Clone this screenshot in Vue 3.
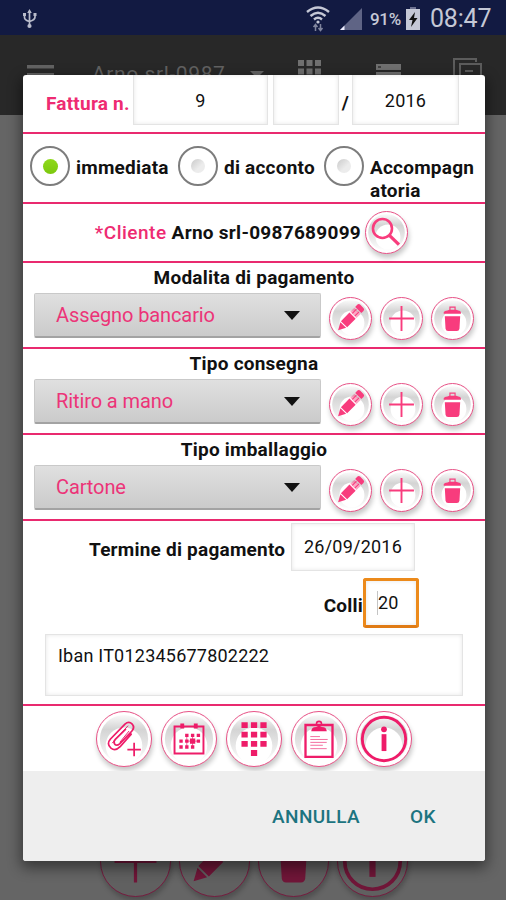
<template>
  <div class="screen">
    <!-- Shared icon shapes -->
    <svg class="icon-defs" aria-hidden="true">
      <defs>
        <linearGradient id="face" x1="0" y1="0" x2="0" y2="1">
          <stop offset="0" stop-color="#fafafa" />
          <stop offset="0.3" stop-color="#d4d4d4" />
          <stop offset="0.65" stop-color="#e8e8e8" />
          <stop offset="1" stop-color="#fff" />
        </linearGradient>
      </defs>
      <symbol id="pencil" viewBox="0 0 56 56">
        <g transform="translate(28 27) rotate(-45)" fill="currentColor">
          <path d="M-24 0L-14-5.500V5.500zM-12.500-6H4V6H-12.500zM15-6H19Q22-6 22-3V3Q22 6 19 6H15z" />
          <path d="M5.500-6H13.500V6H5.500z" opacity=".45" />
          <path d="M6-2.500H14M6 2.500H14" stroke="currentColor" stroke-width="1.500" />
        </g>
      </symbol>
      <symbol id="plus" viewBox="0 0 56 56">
        <path d="M28 11V45M11 28H45" fill="none" stroke="currentColor" stroke-width="2.600" />
      </symbol>
      <symbol id="trash" viewBox="0 0 56 56">
        <path d="M17.500 25H38.500L37.500 42Q37 45 34 45H22Q19 45 18.500 42zM16 21.500V19.500Q17 17 21 17L24 16H33L36 17Q39 17 39.500 19.500V21.500z" fill="currentColor" />
        <path d="M24.500 17V12.500H31.500V17" fill="none" stroke="currentColor" stroke-width="1.600" />
      </symbol>
      <symbol id="search" viewBox="0 0 56 56">
        <g fill="none" stroke="currentColor">
          <circle cx="22.500" cy="22.500" r="13" stroke-width="3.500" />
          <path d="M32 32L45 44.500" stroke-width="4.500" />
        </g>
      </symbol>
      <symbol id="attach" viewBox="0 0 56 56">
        <g fill="none" stroke="currentColor" stroke-width="1.800" stroke-linecap="round">
          <path d="M35.500 23L24 36Q19 41 14.500 37.500Q9.500 33 14 28L29 12.500Q33 9 36.500 12.500Q39.500 16 36 20L23.500 33Q20.500 35.500 18.500 33.500Q16.500 31 19 28.500L29.500 18" />
          <path d="M32 14.500L16 32M33 20L24 31" stroke-width="1" />
          <path d="M38.500 32V46M31.500 39H45.500" stroke-linecap="butt" />
        </g>
      </symbol>
      <symbol id="calendar" viewBox="0 0 56 56">
        <path d="M13 15H43V43H13z" fill="none" stroke="currentColor" stroke-width="2" />
        <path d="M19 12h4v5h-4zM33 12h4v5h-4zM24 22.500h3.500v3.500H24zM30 22.500h3.500v3.500H30zM36 22.500h3.500v3.500H36zM18 28.500h3.500V32H18zM24 28.500h3.500V32H24zM29 27.500h5.500V33H29zM36 28.500h3.500V32H36zM18 34.500h3.500V38H18zM24 34.500h3.500V38H24zM30 34.500h3.500V38H30z" fill="currentColor" />
        <path d="M24 30.200H39M25.700 24V37M31.700 24V37" stroke="currentColor" stroke-width=".7" />
      </symbol>
      <symbol id="keypad" viewBox="0 0 56 56">
        <path d="M15 10.500h6.500v6H15zM24.800 10.500h6.500v6h-6.500zM34.600 10.500h6.500v6h-6.500zM15 20.500h6.500v6H15zM24.800 20.500h6.500v6h-6.500zM34.600 20.500h6.500v6h-6.500zM15 30h6.500v6H15zM24.800 30h6.500v6h-6.500zM34.600 30h6.500v6h-6.500zM24.800 39.500h6.500v6h-6.500z" fill="currentColor" />
      </symbol>
      <symbol id="clipboard" viewBox="0 0 56 56">
        <path d="M14 13.500H42V46.500H14z" fill="none" stroke="currentColor" stroke-width="2.400" />
        <path d="M20 20Q20 15.500 25 15.500H31Q36 15.500 36 20z" fill="currentColor" />
        <circle cx="28" cy="12.300" r="2.600" fill="none" stroke="currentColor" stroke-width="1.600" />
        <path d="M19 25.500H29M19 28.500H37M19 31.500H36M19 34.500H32M19 38H36" stroke="currentColor" stroke-width="1" opacity=".65" />
      </symbol>
      <symbol id="info" viewBox="0 0 56 56">
        <circle cx="28" cy="28" r="22.500" fill="none" stroke="currentColor" stroke-width="3" />
        <circle cx="28" cy="18" r="3" fill="currentColor" />
        <path d="M25.500 23H30.500V40.500H25.500z" fill="currentColor" />
      </symbol>
    </svg>

    <header class="status-bar">
      <svg class="usb" width="16" height="20" viewBox="0 0 16 20" fill="none" stroke="#b9bccb" stroke-width="1.700">
        <path d="M7.500 2V18M2.500 5V8.500Q2.500 11 7.500 12.500M13 5V8Q13 11 7.500 12.500" />
        <path d="M7.500 0L9.800 4H5.200zM1 4h3v3H1zM11.500 4h3v3h-3z" fill="#b9bccb" stroke="none" />
        <circle cx="7.500" cy="17" r="2.100" fill="#b9bccb" stroke="none" />
      </svg>
      <svg width="24" height="26" viewBox="0 0 24 26" fill="none" stroke="#c5c8d6" stroke-width="2.400">
        <path d="M1 6Q12-3 23 6M4.500 10Q12 3.500 19.500 10M8 13.500Q12 10 16 13.500" />
        <circle cx="12" cy="16" r="1.600" fill="#c5c8d6" stroke="none" />
        <path d="M9.500 25V19M7.500 21L9.500 18.500L11.500 21M14.500 18V24M12.500 22L14.500 24.500L16.500 22" stroke="#7f849d" stroke-width="1.500" />
      </svg>
      <svg class="signal" width="22" height="22" viewBox="0 0 22 22">
        <path d="M0 22L22 0V22z" fill="#5f6485" />
        <path d="M0 22L4.500 17.500V22z" fill="#eef" />
      </svg>
      <span class="battery-level">91%</span>
      <svg class="battery" width="14" height="23" viewBox="0 0 14 23">
        <path d="M4 0H10V2H4z" fill="#6c7090" />
        <path d="M0 2H14V23H0z" fill="#c5c8d6" />
        <path d="M9 5L3 13H6.500L5 20L11.500 11H8z" fill="#111" />
      </svg>
      <span class="clock">08:47</span>
    </header>

    <div class="app-bar">
      <svg width="27" height="24" viewBox="0 0 27 24"><path d="M0 0H27V3.500H0zM0 8H27V11H0zM0 16H27V19H0z" fill="#636363" /></svg>
      <span class="app-title">Arno srl-0987</span>
      <svg class="caret" width="14" height="7" viewBox="0 0 14 7"><path d="M0 0H14L7 7z" fill="#666" /></svg>
      <svg class="grid-icon" width="23" height="23" viewBox="0 0 23 23">
        <path d="M0 0h6v6H0zM8.500 0h6v6h-6zM17 0h6v6h-6zM0 8.500h6v6H0zM8.500 8.500h6v6h-6zM17 8.500h6v6h-6z" fill="#707070" />
      </svg>
      <svg class="list-icon" width="25" height="20" viewBox="0 0 25 20">
        <path d="M0 0H25V6H0zM0 8H25V14H0z" fill="#707070" />
        <path d="M2 3H5" stroke="#333" stroke-width="1.500" />
      </svg>
      <svg class="copy-icon" width="29" height="26" viewBox="0 0 29 26" fill="none" stroke="#5c5c5c" stroke-width="2">
        <path d="M1 26V1H23V4M7 26V6H28V26M12 13H20" />
      </svg>
    </div>

    <div class="page-actions">
      <span v-for="icon in pageActions" :key="icon" class="round dim">
        <svg viewBox="0 0 56 56"><use :href="`#${icon}`" /></svg>
      </span>
    </div>

    <div class="dialog">
      <section class="row number-row">
        <label class="accent number-label">Fattura n.</label>
        <span class="field number">{{ invoice.number }}</span>
        <span class="field suffix"></span>
        <span class="slash">/</span>
        <span class="field year">{{ invoice.year }}</span>
      </section>

      <section class="row type-row">
        <div
          v-for="type in types"
          :key="type.value"
          class="option"
          :class="type.value"
          @click="invoice.type = type.value"
        >
          <span class="radio"><i class="dot" :class="{ on: invoice.type === type.value }"></i></span>
          <span class="option-label">{{ type.label }}</span>
        </div>
      </section>

      <section class="row client-row">
        <span><span class="accent client-label">*Cliente</span> {{ invoice.client }}</span>
        <button class="round small">
          <svg viewBox="0 0 56 56"><circle cx="28" cy="28" r="25" fill="url(#face)" /><circle cx="30" cy="34" r="17" fill="#fff" /><use href="#search" /></svg>
        </button>
      </section>

      <section v-for="select in selects" :key="select.title" class="row select-row">
        <h4 class="select-title">{{ select.title }}</h4>
        <div class="select-line">
          <div class="spinner">
            <span>{{ select.value }}</span>
            <i class="arrow"></i>
          </div>
          <button v-for="icon in editActions" :key="icon" class="round small">
            <svg viewBox="0 0 56 56"><circle cx="28" cy="28" r="25" fill="url(#face)" /><circle cx="30" cy="34" r="17" fill="#fff" /><use :href="`#${icon}`" /></svg>
          </button>
        </div>
      </section>

      <section class="row details-row">
        <div class="due-line">
          <label>Termine di pagamento</label>
          <span class="field date">{{ invoice.dueDate }}</span>
        </div>
        <div class="parcels-line">
          <label>Colli</label>
          <span class="field parcels"><i class="cursor"></i>{{ invoice.parcels }}</span>
        </div>
        <div class="field notes">{{ invoice.notes }}</div>
      </section>

      <section class="tools">
        <button v-for="icon in tools" :key="icon" class="round">
          <svg viewBox="0 0 56 56"><circle cx="28" cy="28" r="25" fill="url(#face)" /><circle cx="28" cy="35" r="19" fill="#fff" /><use :href="`#${icon}`" /></svg>
        </button>
      </section>

      <footer class="dialog-footer">
        <span class="cancel">ANNULLA</span>
        <span class="ok">OK</span>
      </footer>
    </div>
  </div>
</template>

<script setup>
import { reactive } from 'vue'

const invoice = reactive({
  number: '9',
  year: '2016',
  type: 'immediate',
  client: 'Arno srl-0987689099',
  dueDate: '26/09/2016',
  parcels: '20',
  notes: 'Iban IT012345677802222'
})

const types = [
  { value: 'immediate', label: 'immediata' },
  { value: 'deposit', label: 'di acconto' },
  { value: 'accompanying', label: 'Accompagnatoria' }
]

const selects = [
  { title: 'Modalita di pagamento', value: 'Assegno bancario' },
  { title: 'Tipo consegna', value: 'Ritiro a mano' },
  { title: 'Tipo imballaggio', value: 'Cartone' }
]

const editActions = ['pencil', 'plus', 'trash']
const tools = ['attach', 'calendar', 'keypad', 'clipboard', 'info']
const pageActions = ['plus', 'pencil', 'trash', 'info']
</script>

<style>
body {
  margin: 0;
}
</style>

<style scoped>
.screen {
  position: relative;
  display: flex;
  flex-direction: column;
  width: 506px;
  height: 900px;
  overflow: hidden;
  background: #656565;
  font-family: Roboto, sans-serif;
  color: #111;
}

.screen * {
  box-sizing: border-box;
}

.icon-defs {
  position: absolute;
  width: 0;
  height: 0;
}

.status-bar {
  display: flex;
  align-items: center;
  height: 35px;
  flex: none;
  padding: 2px 15px 0 22px;
  background: #121a42;
  color: #c5c8d6;
}

.usb {
  margin-right: auto;
}

.signal {
  margin-left: 10px;
}

.battery-level {
  width: 31px;
  margin-left: 8px;
  font-size: 17px;
  font-weight: 500;
  letter-spacing: -0.3px;
}

.battery {
  margin-left: 5px;
}

.clock {
  width: 61px;
  margin-left: 10px;
  font-size: 25px;
  line-height: 30px;
  letter-spacing: -0.2px;
}

.app-bar {
  display: flex;
  align-items: flex-start;
  height: 80px;
  flex: none;
  padding: 30px 23px 0 27px;
  background: #282828;
}

.app-title {
  width: 134px;
  margin: -5px 0 0 38px;
  font-size: 21px;
  line-height: 28px;
  letter-spacing: 0.6px;
  color: #626262;
  white-space: nowrap;
}

.caret {
  margin: 6px 0 0 24px;
}

.grid-icon {
  margin: -5px 0 0 34px;
}

.list-icon {
  margin: -1px 0 0 55px;
}

.copy-icon {
  margin: -7px 0 0 52px;
}

.page-actions {
  display: flex;
  gap: 8px;
  margin-top: auto;
  padding: 0 0 3px 100px;
}

.round {
  flex: none;
  width: 56px;
  height: 56px;
  padding: 0;
  border: 1px solid #e85287;
  border-radius: 50%;
  background: #fff;
  color: #ee1c69;
  box-shadow: 1px 4px 5px rgba(0, 0, 0, 0.22);
}

.round svg {
  display: block;
  width: 100%;
  height: 100%;
}

.round.small {
  width: 43px;
  height: 43px;
  color: #f83c7d;
}

.round.dim {
  width: 71px;
  height: 71px;
  border-color: #761d40;
  background: #606060;
  color: #701638;
}

.dialog {
  position: absolute;
  top: 75px;
  left: 23px;
  width: 462px;
  height: 786px;
  display: flex;
  flex-direction: column;
  overflow: hidden;
  border-radius: 3px;
  background: #fff;
  box-shadow: 0 5px 14px 2px rgba(0, 0, 0, 0.45);
  font-size: 19px;
  font-weight: 700;
  letter-spacing: 0.22px;
}

.row {
  display: flex;
  flex: none;
  border-bottom: 2px solid #e92a6f;
}

.accent {
  color: #ee2b72;
}

.field {
  border: 1px solid #e4e4e4;
  box-shadow: inset 0 0 4px rgba(0, 0, 0, 0.1);
  background: #fff;
  font-size: 18px;
  font-weight: 400;
  text-align: center;
}

.number-row {
  height: 59px;
  padding-left: 23px;
}

.number-row .field {
  height: 50px;
  border-top: 0;
  line-height: 51px;
}

.number-label {
  width: 87px;
  line-height: 58px;
  white-space: nowrap;
}

.number {
  width: 135px;
}

.suffix {
  width: 66px;
  margin-left: 5px;
}

.slash {
  width: 13px;
  line-height: 56px;
  text-align: center;
}

.year {
  width: 107px;
}

.type-row {
  height: 70px;
  padding: 12px 0 0 7px;
}

.option {
  display: flex;
}

.immediate {
  width: 148px;
}

.deposit {
  width: 146px;
}

.radio {
  display: flex;
  flex: none;
  align-items: center;
  justify-content: center;
  width: 40px;
  height: 40px;
  border: 2px solid #7d7d7d;
  border-radius: 50%;
}

.dot {
  width: 14px;
  height: 14px;
  border-radius: 50%;
  background: linear-gradient(135deg, #c9c9c9, #ececec 60%);
}

.dot.on {
  width: 15px;
  height: 15px;
  background: linear-gradient(#8fd91c, #7cc80e);
}

.option-label {
  width: 110px;
  margin: 10px 0 0 6px;
  line-height: 23px;
  word-break: break-all;
}

.client-row {
  height: 59px;
  align-items: center;
  justify-content: flex-end;
  gap: 4px;
  padding: 0 77px 0 0;
  letter-spacing: 0.28px;
}

.client-label {
  font-weight: 500;
  letter-spacing: 0.5px;
}

.select-row {
  flex-direction: column;
  height: 86px;
}

.select-title {
  margin: 3px 0 0;
  font-size: 19px;
  font-weight: 700;
  line-height: 24px;
  text-align: center;
}

.select-line {
  display: flex;
  gap: 8px;
  padding: 3px 0 0 11px;
}

.select-line .round {
  margin-top: 4px;
}

.spinner {
  display: flex;
  align-items: center;
  justify-content: space-between;
  width: 287px;
  height: 45px;
  padding: 0 20px 0 21px;
  border: 1px solid #c9c9c9;
  border-bottom: 2px solid #a3a3a3;
  border-radius: 2px;
  background: linear-gradient(#e0e0e0, #cbcbcb);
  font-size: 20px;
  font-weight: 400;
  letter-spacing: -0.1px;
  color: #ec3478;
}

.arrow {
  border: 8px solid transparent;
  border-top: 9px solid #111;
  border-bottom: 0;
}

.details-row {
  flex-direction: column;
  height: 185px;
}

.due-line {
  display: flex;
  height: 50px;
  padding: 2px 0 0 66px;
}

.due-line label {
  width: 202px;
  line-height: 54px;
  white-space: nowrap;
}

.date {
  width: 124px;
  height: 48px;
  line-height: 46px;
}

.parcels-line {
  display: flex;
  justify-content: flex-end;
  height: 62px;
  padding: 7px 66px 0 0;
}

.parcels-line label {
  line-height: 55px;
}

.parcels {
  display: flex;
  align-items: center;
  width: 56px;
  height: 50px;
  padding: 0 0 1px 11px;
  border: 3px solid #ec8a1b;
  border-bottom-color: #e07b14;
  border-radius: 3px;
}

.cursor {
  width: 1px;
  height: 24px;
  background: #c4c4c4;
}

.notes {
  width: 418px;
  height: 62px;
  margin: 1px 0 0 22px;
  padding: 8px 12px;
  line-height: 26px;
  text-align: left;
}

.tools {
  display: flex;
  flex: none;
  gap: 9px;
  height: 65px;
  padding: 5px 0 0 73px;
}

.dialog-footer {
  display: flex;
  flex: 1;
  justify-content: flex-end;
  gap: 50px;
  padding-right: 49px;
  background: #eee;
  font-size: 19px;
  font-weight: 500;
  letter-spacing: 0.4px;
  line-height: 92px;
  color: #1c7480;
}
</style>
